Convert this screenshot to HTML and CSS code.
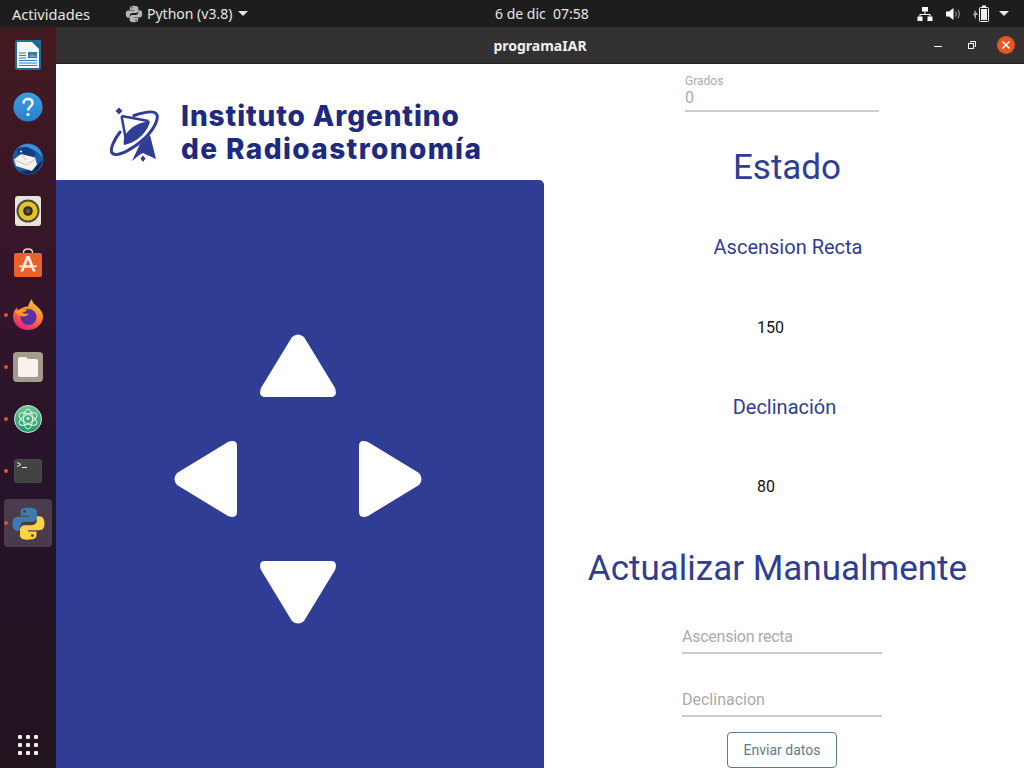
FILE: index.html
```html
<!DOCTYPE html>
<html lang="es">
<head>
  <meta charset="UTF-8">
  <title>programaIAR</title>
  <link rel="stylesheet" href="styles.css">
</head>
<body>
  <header class="topbar">
    <div class="topbar-left">
      <span class="activities">Actividades</span>
      <span class="app-menu">
        <svg class="app-menu-icon" viewBox="0 0 24 24" width="18" height="18">
          <path id="snake-grey" fill="#b5b5b5" fill-rule="evenodd" d="M11.900 1C8 1 6.500 2.300 6.500 4v2.600h5.700v.8H4.500C2.300 7.400 1 9 1 12s1.300 5 3.400 5h1.900v-3c0-2 1.700-3.200 3.500-3.200h5c1.600 0 3-1.300 3-3V4c0-1.800-2-3-5.900-3zM9.300 2.700a1 1 0 1 1 0 2 1 1 0 0 1 0-2z"/>
          <use href="#snake-grey" transform="rotate(180 12 12)"/>
        </svg>
        Python (v3.8)
        <i class="caret"></i>
      </span>
    </div>
    <span class="clock">6 de dic&nbsp;&nbsp;07:58</span>
    <div class="tray">
      <svg viewBox="0 0 16 16" width="16" height="16" fill="#fff">
        <rect x="5" y="1" width="6" height="4.500"/>
        <rect x="0.500" y="10.500" width="5" height="4.500"/>
        <rect x="10.500" y="10.500" width="5" height="4.500"/>
        <path d="M7.500 5.500h1V8h5v2.500h-1V9h-9v1.500h-1V8h5z"/>
      </svg>
      <svg viewBox="0 0 16 16" width="16" height="16">
        <path fill="#fff" d="M1 5.500h3L8.500 2v12L4 10.500H1z"/>
        <path fill="none" stroke="#999" stroke-width="1.100" d="M10.500 5.500c1 1.500 1 3.500 0 5M12.800 3.800c1.800 2.500 1.800 6 0 8.500"/>
      </svg>
      <svg class="tray-battery" viewBox="0 0 20 18" width="20" height="18">
        <path fill="#aaa" d="M4.500 4.500v4H3l3 6v-4.500h2z"/>
        <rect x="9.500" y="2.500" width="9" height="14" rx="1" fill="none" stroke="#fff" stroke-width="1"/>
        <rect x="12" y="0.500" width="4" height="2" fill="#fff"/>
        <rect x="11" y="4" width="6" height="11" fill="#eee"/>
      </svg>
      <i class="caret"></i>
    </div>
  </header>

  <div class="desktop">
    <nav class="dock">
      <div class="dock-item">
        <svg viewBox="0 0 26 30" width="26" height="30">
          <path fill="#1d6f9a" d="M2 0h16l8 8v20a2 2 0 0 1-2 2H2a2 2 0 0 1-2-2V2a2 2 0 0 1 2-2z"/>
          <path fill="#f4f7f8" d="M2 2h15l7 7v19H2z"/>
          <path fill="#1d6f9a" d="M18 0l8 8V0z"/>
          <rect x="13" y="12" width="9" height="6" fill="#2a7fb0"/>
          <path fill="#8f9ea6" d="M14 17l3-3 2 2 1-1 1 2z"/>
          <path stroke="#2483bb" stroke-width="1.100" d="M4 13h7M4 15.500h7M4 18h7M4 20.500h18M4 23h18M4 25.500h18"/>
        </svg>
      </div>
      <div class="dock-item">
        <svg viewBox="0 0 30 30" width="30" height="30">
          <defs><linearGradient id="help-bg" x1="0" y1="0" x2="0" y2="1"><stop offset="0" stop-color="#3a9ee4"/><stop offset="1" stop-color="#2a80c8"/></linearGradient></defs>
          <circle cx="15" cy="15" r="14.500" fill="url(#help-bg)"/>
          <path fill="none" stroke="#fff" stroke-width="2.400" d="M10.500 11.500c0-3 2-4.500 4.500-4.500s4.500 1.500 4.500 4.200c0 3.300-4.500 3.500-4.500 7.300"/>
          <circle cx="15" cy="22.500" r="1.600" fill="#fff"/>
        </svg>
      </div>
      <div class="dock-item">
        <svg viewBox="0 0 32 32" width="32" height="32">
          <circle cx="16" cy="16" r="15.500" fill="#1d5ca6"/>
          <path fill="#3f8fdc" d="M5 6c4-5 11-6.500 17-3.500 5 2.500 8 7 8 12-3-5-7-8-12-9-4-.8-9 0-13 .5z"/>
          <path fill="#123f80" d="M5 6c3-1.500 7-2.500 11-1.500 3 .8 6 3 7.500 6L21 17 6 12z"/>
          <path fill="#0c2a5c" d="M30 17c0 7-6 14-14 14-3 0-6-1-8-3 9 1 17-4 22-11z"/>
          <path fill="#f5f2ea" d="M2 16.500L9 11l14 3.500 2 7-5 6.500L4 23z"/>
          <path fill="none" stroke="#b8b5ac" stroke-width="0.800" d="M3 17l11 5 10-6M9 11l5 6"/>
          <circle cx="9" cy="8.500" r="1.100" fill="#e8e2c8"/>
        </svg>
      </div>
      <div class="dock-item">
        <svg viewBox="0 0 26 30" width="26" height="30">
          <rect width="26" height="30" rx="3" fill="#e8e5d8"/>
          <circle cx="13" cy="15" r="11.500" fill="#4a4a44"/>
          <circle cx="13" cy="15" r="9.500" fill="#e8c320"/>
          <circle cx="13" cy="15" r="4.800" fill="#2b2a26"/>
          <circle cx="13" cy="15" r="2.500" fill="#57564f"/>
        </svg>
      </div>
      <div class="dock-item">
        <svg viewBox="0 0 30 30" width="30" height="30">
          <path fill="none" stroke="#f3d2b8" stroke-width="1.400" d="M10.500 6V4.500C10.500 2 12.500 1 15 1s4.500 1 4.500 3.500V6"/>
          <path fill="#e9622c" d="M3 5h24a2 2 0 0 1 2 2v20a2 2 0 0 1-2 2H3a2 2 0 0 1-2-2V7a2 2 0 0 1 2-2z"/>
          <path fill="#f9e9df" d="M13.500 8h3l6.200 15.500h-2.900l-1.400-3.800h-6.800l-1.400 3.800H7.300zM15 11.500l-2.200 6h4.400z"/>
          <rect x="6" y="17.500" width="18" height="1.500" fill="#f9e9df"/>
        </svg>
      </div>
      <div class="dock-item">
        <i class="running-dot"></i>
        <svg viewBox="0 0 32 32" width="32" height="32">
          <defs>
            <linearGradient id="fox-bg" x1="0.700" y1="0" x2="0.200" y2="1"><stop offset="0" stop-color="#ffcf30"/><stop offset="0.500" stop-color="#ff7139"/><stop offset="1" stop-color="#e31587"/></linearGradient>
          </defs>
          <path fill="url(#fox-bg)" d="M16 31C7.500 31 1 25 1 17.500c0-4 1.500-7 4-9 0 2 1 3 2 3.500C9 8.500 13 7.500 16 7.500c1-3 2-5 4-7.500 0 3 1.500 4.500 4 6.500 3.500 3 7 6.500 7 11 0 7.500-6.500 13.500-15 13.500z"/>
          <circle cx="16.500" cy="18" r="8" fill="#5b2ea6"/>
          <path fill="#ff9a24" d="M3 13c3-3 8-4 12-2-1 1-2 2-5 2.500 2 1.500 5 1.500 7 1-1.500 2.500-5 3.500-8 2.500-3-1-5-2-6-4z"/>
        </svg>
      </div>
      <div class="dock-item">
        <i class="running-dot"></i>
        <svg viewBox="0 0 30 30" width="30" height="30">
          <rect width="30" height="30" rx="4" fill="#a39c8c"/>
          <path fill="#f6f3ee" d="M5 7a2 2 0 0 1 2-2h6l2 2h8a2 2 0 0 1 2 2v14a2 2 0 0 1-2 2H7a2 2 0 0 1-2-2z"/>
        </svg>
      </div>
      <div class="dock-item">
        <i class="running-dot"></i>
        <svg viewBox="0 0 28 28" width="28" height="28">
          <defs><linearGradient id="atom-bg" x1="0" y1="0" x2="0" y2="1"><stop offset="0" stop-color="#6fc594"/><stop offset="1" stop-color="#1c9a68"/></linearGradient></defs>
          <circle cx="14" cy="14" r="13.500" fill="url(#atom-bg)" stroke="#d5e5dc" stroke-width="1"/>
          <g fill="none" stroke="#e9f4ec" stroke-width="1">
            <ellipse cx="14" cy="14" rx="4.500" ry="10"/>
            <ellipse cx="14" cy="14" rx="4.500" ry="10" transform="rotate(60 14 14)"/>
            <ellipse cx="14" cy="14" rx="4.500" ry="10" transform="rotate(-60 14 14)"/>
          </g>
          <circle cx="14" cy="13.500" r="1.500" fill="#e9f4ec"/>
        </svg>
      </div>
      <div class="dock-item">
        <i class="running-dot"></i>
        <svg viewBox="0 0 28 24" width="28" height="24">
          <rect x="0.300" y="0.300" width="27.400" height="23.400" rx="3" fill="#434343" stroke="#5a5a5a" stroke-width="0.600"/>
          <path fill="none" stroke="#eee" stroke-width="1" d="M3 3.500l4 2-4 2"/>
          <rect x="8" y="8" width="5" height="1" fill="#eee"/>
        </svg>
      </div>
      <div class="dock-item dock-item-active">
        <i class="running-dot"></i>
        <svg viewBox="0 0 24 24" width="35" height="35">
          <path fill="#3d7ab0" fill-rule="evenodd" d="M11.900 1C8 1 6.500 2.300 6.500 4v2.600h5.700v.8H4.500C2.300 7.400 1 9 1 12s1.300 5 3.400 5h1.900v-3c0-2 1.700-3.200 3.500-3.200h5c1.600 0 3-1.300 3-3V4c0-1.800-2-3-5.900-3zM9.300 2.700a1 1 0 1 1 0 2 1 1 0 0 1 0-2z"/>
          <path fill="#fdd346" fill-rule="evenodd" d="M12.100 23c3.900 0 5.400-1.300 5.400-3v-2.600h-5.700v-.8h7.700c2.200 0 3.500-1.600 3.500-4.600s-1.300-5-3.400-5h-1.900v3c0 2-1.700 3.200-3.500 3.200h-5c-1.600 0-3 1.300-3 3v4c0 1.800 2 3 5.900 3zm2.600-1.700a1 1 0 1 1 0-2 1 1 0 0 1 0 2z"/>
        </svg>
      </div>
      <div class="dock-apps">
        <i></i><i></i><i></i><i></i><i></i><i></i><i></i><i></i><i></i>
      </div>
    </nav>

    <div class="window">
      <div class="titlebar">
        <span class="title">programaIAR</span>
        <div class="window-controls">
          <i class="ctl-min"></i>
          <svg viewBox="0 0 8 8" width="8" height="8" fill="none" stroke="#fff" stroke-width="1">
            <rect x="0.500" y="2.500" width="5" height="5"/>
            <path d="M2.500 1.500V.5h5v5H6.500"/>
          </svg>
          <span class="ctl-close">
            <svg viewBox="0 0 18 18" width="18" height="18"><path stroke="#fff" stroke-width="1.500" d="M5.500 5.500l7 7M12.500 5.500l-7 7"/></svg>
          </span>
        </div>
      </div>

      <main class="app">
        <section class="left">
          <div class="logo">
            <svg class="logo-mark" viewBox="0 0 54 62" width="54" height="62" fill="#2f3d96">
              <path d="M10 3.500l3.500 3.500L10 10.500 6.500 7z"/>
              <path fill="none" stroke="#2f3d96" stroke-width="3" stroke-linecap="round" d="M25 11.500C34 8.500 44 6.500 47 9.500 50.500 13 46.500 23 37 33 27 43 9 54 3.500 49.500 0 46 5 36 11 28"/>
              <path d="M15 41C12.500 30 24 19 41 17 39 28 27 39 15 41z"/>
              <path stroke="#2f3d96" stroke-width="2.500" d="M12.500 12l4.500 24M12.500 12l27 5"/>
              <path d="M31 40L41 31l6 24-10-4.500L34 49l-3 1.500L23 57z"/>
              <path d="M34 51.500l2.500 3L34 58l-2.500-3.500z"/>
            </svg>
            <h1 class="logo-text">
              <span class="logo-line">Instituto Argentino</span>
              <span class="logo-line logo-line-wide">de Radioastronomía</span>
            </h1>
          </div>
          <div class="pad-panel">
            <div class="pad">
              <svg class="arrow arrow-up" viewBox="0 0 76 63"><path fill="#fff" d="M32 3Q38-2 44 3L75 54Q78 63 71 63H5Q-2 63 1 54Z"/></svg>
              <svg class="arrow arrow-left" viewBox="0 0 63 76"><path fill="#fff" d="M3 44Q-2 38 3 32L54 1Q63-2 63 5V71Q63 78 54 75Z"/></svg>
              <svg class="arrow arrow-right" viewBox="0 0 63 76"><path fill="#fff" d="M60 32Q65 38 60 44L9 75Q0 78 0 71V5Q0-2 9 1Z"/></svg>
              <svg class="arrow arrow-down" viewBox="0 0 76 63"><path fill="#fff" d="M44 60Q38 65 32 60L1 9Q-2 0 5 0H71Q78 0 75 9Z"/></svg>
            </div>
          </div>
        </section>

        <section class="right">
          <div class="grados">
            <label class="grados-label">Grados</label>
            <div class="grados-value">0</div>
          </div>
          <div class="row h-big estado">Estado</div>
          <div class="row h-small asc">Ascension Recta</div>
          <div class="row value">150</div>
          <div class="row h-small dec">Declinación</div>
          <div class="row value value-last">80</div>
          <div class="row h-big actualizar">Actualizar Manualmente</div>
          <input class="field field-asc" type="text" placeholder="Ascension recta">
          <input class="field field-dec" type="text" placeholder="Declinacion">
          <button class="send" type="button">Enviar datos</button>
        </section>
      </main>
    </div>
  </div>
</body>
</html>
```

FILE: styles.css
```css
* {
  margin: 0;
  padding: 0;
  box-sizing: border-box;
}

html, body {
  width: 1024px;
  height: 768px;
  overflow: hidden;
}

body {
  font-family: 'Roboto', sans-serif;
  background-color: #fff;
  display: flex;
  flex-direction: column;
}

/* Barra superior */
.topbar {
  height: 27px;
  flex: none;
  background-color: #1d1d1d;
  color: #e6e6e6;
  font-family: 'Noto Sans', sans-serif;
  font-size: 14px;
  display: flex;
  align-items: center;
}

.topbar-left {
  width: 495px;
  padding-left: 12px;
  display: flex;
  align-items: center;
}

.activities {
  width: 113px;
  font-size: 14.6px;
}

.app-menu {
  display: flex;
  align-items: center;
}

.app-menu-icon {
  margin-right: 4px;
}

.caret {
  display: inline-block;
  width: 0;
  height: 0;
  margin-left: 6px;
  border-left: 5px solid transparent;
  border-right: 5px solid transparent;
  border-top: 5px solid #e6e6e6;
}

.tray {
  margin-left: auto;
  padding-right: 15px;
  display: flex;
  align-items: center;
  gap: 12px;
}

.tray-battery {
  margin-left: -3px;
}

.tray .caret {
  margin-left: -3px;
}

/* Dock */
.desktop {
  flex: 1;
  display: flex;
  min-height: 0;
}

.dock {
  width: 56px;
  flex: none;
  padding-top: 2px;
  position: relative;
  background: linear-gradient(180deg, #43191f 0%, #33152a 35%, #26142a 60%, #22141f 100%);
  display: flex;
  flex-direction: column;
  align-items: center;
}

.dock-item {
  width: 48px;
  height: 52px;
  flex: none;
  display: flex;
  align-items: center;
  justify-content: center;
  position: relative;
}

.dock-item-active::before {
  content: "";
  position: absolute;
  left: 0;
  top: 2px;
  width: 48px;
  height: 48px;
  border-radius: 4px;
  background-color: rgba(255, 255, 255, 0.17);
}

.dock-item svg {
  position: relative;
}

.running-dot {
  position: absolute;
  left: -0.5px;
  top: 24px;
  width: 4px;
  height: 4px;
  border-radius: 50%;
  background-color: #e95420;
  z-index: 1;
}

.dock-apps {
  margin-top: auto;
  margin-bottom: 13px;
  display: grid;
  grid-template-columns: repeat(3, 4px);
  grid-auto-rows: 4px;
  gap: 4px;
}

.dock-apps i {
  background-color: #eee;
  border-radius: 1px;
}

/* Fenetre */
.window {
  flex: 1;
  min-width: 0;
  display: flex;
  flex-direction: column;
}

.titlebar {
  height: 37px;
  flex: none;
  background-color: #333131;
  border-bottom: 1px solid #222;
  color: #f0f0f0;
  font-family: 'Noto Sans', sans-serif;
  font-size: 14px;
  font-weight: bold;
  display: flex;
  align-items: center;
  justify-content: center;
  position: relative;
}

.window-controls {
  position: absolute;
  right: 9px;
  top: 0;
  height: 36px;
  display: flex;
  align-items: center;
  gap: 26px;
}

.ctl-min {
  width: 8px;
  height: 1px;
  margin-top: 3px;
  background-color: #fff;
}

.ctl-close {
  width: 18px;
  height: 18px;
  border-radius: 50%;
  background-color: #e95420;
  margin-left: -5px;
}

.ctl-close svg {
  display: block;
}

/* Application */
.app {
  flex: 1;
  min-height: 0;
  display: flex;
  background-color: #fff;
}

.left {
  width: 488px;
  flex: none;
  display: flex;
  flex-direction: column;
}

.logo {
  height: 116px;
  flex: none;
  padding: 18px 0 0 53px;
  display: flex;
  align-items: center;
  gap: 18px;
}

.logo-mark {
  flex: none;
  margin-top: 8px;
}

.logo-text {
  font-family: 'Inter', sans-serif;
  font-size: 28px;
  font-weight: 800;
  color: #1d2a80;
  margin-top: 3px;
  white-space: nowrap;
}

.logo-line {
  display: block;
  height: 33px;
  line-height: 33px;
  letter-spacing: 0.9px;
}

.logo-line-wide {
  letter-spacing: 1.4px;
}

.pad-panel {
  flex: 1;
  background-color: #303d95;
  border-top-right-radius: 5px;
  display: flex;
  align-items: center;
  justify-content: center;
  padding: 10px 4px 0 0;
}

.pad {
  display: grid;
  grid-template-columns: 63px 76px 63px;
  grid-template-rows: 63px 76px 63px;
  gap: 44px 23px;
}

.arrow {
  display: block;
}

.arrow-up {
  grid-column: 2;
  grid-row: 1;
  width: 76px;
  height: 63px;
}

.arrow-left {
  grid-column: 1;
  grid-row: 2;
  width: 63px;
  height: 76px;
}

.arrow-right {
  grid-column: 3;
  grid-row: 2;
  width: 63px;
  height: 76px;
}

.arrow-down {
  grid-column: 2;
  grid-row: 3;
  width: 76px;
  height: 63px;
}

.right {
  flex: 1;
  min-width: 0;
  display: flex;
  flex-direction: column;
}

.grados {
  width: 194px;
  height: 38px;
  margin: 10px 0 15px 141px;
  flex: none;
  border-bottom: 2px solid #ccc;
  color: #aaa;
}

.grados-label {
  display: block;
  font-size: 12px;
  line-height: 14px;
}

.grados-value {
  font-size: 16px;
  line-height: 20px;
}

.row {
  height: 80px;
  flex: none;
  display: flex;
  align-items: center;
  justify-content: center;
  color: #303d95;
}

.h-big {
  font-size: 35px;
}

.h-small {
  font-size: 20px;
}

.estado {
  padding-left: 6px;
}

.asc {
  padding-left: 8px;
}

.dec {
  padding-left: 1px;
}

.actualizar {
  padding: 2px 13px 0 0;
}

.value {
  justify-content: flex-start;
  padding-left: 213px;
  font-size: 16px;
  color: #111;
}

.value-last {
  padding-bottom: 2px;
}

.field {
  display: block;
  width: 200px;
  height: 34px;
  margin-left: 138px;
  flex: none;
  border: none;
  border-bottom: 2px solid #ccc;
  outline: none;
  background: none;
  font-family: 'Roboto', sans-serif;
  font-size: 16px;
}

.field::placeholder {
  color: #aaa;
  opacity: 1;
}

.field-asc {
  margin-top: 13px;
  letter-spacing: -0.25px;
}

.field-dec {
  margin-top: 29px;
}

.send {
  width: 110px;
  height: 36px;
  margin: 15px 0 0 183px;
  flex: none;
  border: 1px solid #5b7b8c;
  border-radius: 4px;
  background-color: #fff;
  color: #5b7b8c;
  font-family: 'Roboto', sans-serif;
  font-size: 14px;
}
```
